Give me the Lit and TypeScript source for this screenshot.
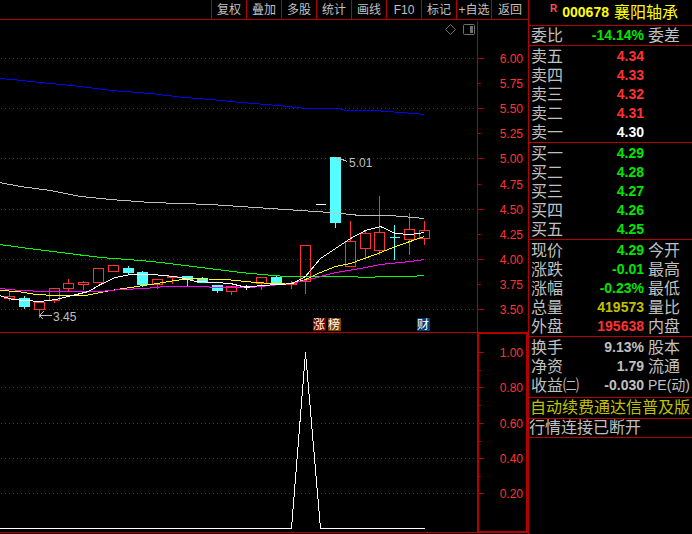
import { LitElement, html, svg, css } from "lit";
import { customElement } from "lit/decorators.js";

type Kind = "up" | "down" | "flat";
interface Candle {
  x: number;
  high: number;
  top: number;
  bottom: number;
  low: number;
  kind: Kind;
}

const c = (x: number, high: number, top: number, bottom: number, low: number, kind: Kind): Candle =>
  ({ x, high, top, bottom, low, kind });

const CANDLES: Candle[] = [
  c(9, 290, 296, 298, 299, "up"),
  c(24, 295, 298, 306, 307, "down"),
  c(39, 300, 302, 309, 316, "up"),
  c(54, 288, 288, 300, 301, "up"),
  c(68, 278, 283, 288, 289, "up"),
  c(83, 280, 282, 284, 288, "up"),
  c(98, 268, 268, 282, 282, "up"),
  c(113, 264, 265, 271, 271, "up"),
  c(128, 265, 268, 272, 273, "down"),
  c(142, 270, 272, 284, 285, "down"),
  c(157, 279, 279, 284, 287, "up"),
  c(172, 276, 276, 277, 282, "up"),
  c(187, 276, 276, 279, 285, "down"),
  c(202, 276, 279, 282, 282, "down"),
  c(217, 284, 285, 290, 291, "down"),
  c(231, 286, 286, 291, 293, "up"),
  c(246, 284, 286, 286, 288, "flat"),
  c(261, 277, 277, 283, 288, "up"),
  c(276, 274, 277, 282, 282, "down"),
  c(291, 280, 283, 284, 287, "up"),
  c(305, 245, 245, 281, 292, "up"),
  c(320, 204, 204, 204, 204, "flat"),
  c(335, 157, 157, 222, 226, "down"),
  c(350, 220, 241, 266, 266, "up"),
  c(365, 230, 233, 248, 256, "up"),
  c(379, 195, 232, 250, 253, "up"),
  c(394, 224, 237, 237, 258, "down"),
  c(409, 212, 229, 239, 253, "up"),
  c(424, 220, 230, 238, 243, "up"),
];

const AVERAGES: [string, string][] = [
  ["#0000ff", "-1,78 12,79 30,81 51,83 80,86 111,90 150,93 184,97 210,99 240,102 278,105 305,108 338,108 345,110 374,110 400,112 424,114"],
  ["#c0c0c0", "-1,182 20,186 50,190 80,196 110,199 150,202 180,203 210,204 240,206 270,208 300,210 330,212 360,215 390,215 424,218"],
  ["#00ff00", "-1,244 36,249 60,252 100,257 140,260 160,262 200,267 240,272 262,274 285,276 350,276 365,277 385,276 410,276 424,275"],
  ["#ffff00", "-1,290 18,291 35,294 55,295 85,295 110,290 130,287 150,284 175,280 190,278 225,279 255,282 272,283 290,283 305,279 320,272 335,266 350,263 375,254 395,246 424,236"],
  ["#ff00ff", "-1,288 20,290 45,291 100,291 120,289 145,288 165,286 205,286 212,287 250,287 270,285 290,283 305,280 320,276 335,272 360,268 380,264 410,261 424,259"],
  ["#ffffff", "-1,295 12,299 25,300 40,301 55,299 72,295 88,291 100,284 115,277 130,274 150,274 165,275 180,277 195,281 215,282 230,283 246,287 260,285 280,284 292,283 305,276 320,258 335,248 350,238 365,230 380,226 395,233 410,234 424,232"],
];

// [y, label, has grid line]
const PRICE_AXIS: [number, string, boolean][] = [
  [58, "6.00", true], [83, "5.75", false], [108, "5.50", true], [133, "5.25", false],
  [158, "5.00", true], [184, "4.75", false], [209, "4.50", true], [234, "4.25", false],
  [259, "4.00", true], [284, "3.75", false], [309, "3.50", true],
];
const SIGNAL_AXIS: [number, string, boolean][] = [
  [352, "1.00", false], [387, "0.80", true], [423, "0.60", true], [458, "0.40", true], [493, "0.20", true],
];

const BADGES: [number, string, string][] = [
  [313, "涨", "#800000"], [328, "榜", "#804000"], [417, "财", "#003c78"],
];

@customElement("stock-charts")
class StockCharts extends LitElement {
  static styles = css`
    :host { display: block; position: relative; }
    svg { display: block; width: 100%; height: auto; }
    .axis { stroke: #b40000; fill: none; }
    .grid { stroke: #c80000; stroke-dasharray: 1 3; fill: none; }
    .frame { stroke: #b40000; stroke-width: 2; fill: none; }
    .line { fill: none; stroke-width: 1; }
    .up { stroke: #ff3232; fill: none; }
    .down { stroke: #54ffff; fill: #54ffff; }
    .flat { stroke: #ffffff; fill: none; }
    .mark { stroke: #c0c0c0; fill: none; }
    text { font: 12px "Liberation Sans", "Noto Sans CJK SC", sans-serif; }
    .scale { fill: #ff3232; text-anchor: end; }
    .note { fill: #c0c0c0; }
    .badge { fill: #ffffff; text-anchor: middle; }
    .tools { position: absolute; top: 3px; right: 53px; display: flex; gap: 5px; }
    .tools button { width: 13px; height: 13px; padding: 0; border: 0; background: none; }
  `;

  private candle(k: Candle) {
    const l = k.x - 5;
    return svg`<g class=${k.kind}>
      ${k.low > k.bottom ? svg`<path d="M${k.x} ${k.bottom}V${k.low + 1}"/>` : null}
      ${k.top > k.high ? svg`<path d="M${k.x} ${k.high}V${k.top}"/>` : null}
      ${k.top === k.bottom
        ? svg`<path d="M${l} ${k.top}H${l + 10}"/>`
        : svg`<rect x=${l} y=${k.top} width="10" height=${k.bottom - k.top}/>`}
    </g>`;
  }

  render() {
    return html`
      <svg viewBox="0 20 528 312" role="img" aria-label="K线图">
        <g transform="translate(.5 .5)" shape-rendering="crispEdges">
          ${PRICE_AXIS.map(([y, , major]) => svg`
            ${major ? svg`<path class="grid" d="M.5 ${y}H476"/>` : null}
            <path class="axis" d="M477 ${y}H${major ? 483 : 480}"/>`)}
          <path class="axis" d="M477 20V332"/>
          ${CANDLES.map((k) => this.candle(k))}
          ${AVERAGES.map(([color, pts]) => svg`<polyline class="line" stroke=${color} points=${pts}/>`)}
          <path class="mark" d="M39 315H51M39 315L43 311M39 315L43 319M336 157L340 157M336 157L338 161M339 158L347 161"/>
        </g>
        ${PRICE_AXIS.map(([y, t]) => svg`<text class="scale" x="523" y=${y + 5}>${t}</text>`)}
        <text class="note" x="53" y="321">3.45</text>
        <text class="note" x="349" y="167">5.01</text>
        ${BADGES.map(([x, t, bg]) => svg`
          <rect x=${x} y="318" width="13" height="13" rx="1" fill=${bg}/>
          <text class="badge" x=${x + 6} y="329">${t}</text>`)}
      </svg>
      <svg viewBox="0 332 528 202" role="img" aria-label="指标图">
        <g transform="translate(.5 .5)" shape-rendering="crispEdges">
          ${SIGNAL_AXIS.map(([y, , grid]) => svg`
            ${grid ? svg`<path class="grid" d="M.5 ${y}H476"/>` : null}
            <path class="axis" d="M477 ${y}H483"/>`)}
          ${[370, 405, 441, 476].map((y) => svg`<path class="axis" d="M477 ${y}H480"/>`)}
          <path class="axis" d="M-1 332H477M-1 532H477"/>
          <polyline class="flat" points="-1,528 291,528 305,352 320,528 424,528"/>
        </g>
        <rect class="frame" x="478" y="333" width="49" height="199" shape-rendering="crispEdges"/>
        ${SIGNAL_AXIS.map(([y, t]) => svg`<text class="scale" x="523" y=${y + 5}>${t}</text>`)}
      </svg>
      <div class="tools">
        <button aria-label="标记">
          <svg viewBox="0 0 13 13"><path d="M6.500 1.500L11.500 6.500L6.500 11.500L1.500 6.500Z" fill="none" stroke="#707070"/></svg>
        </button>
        <button aria-label="侧栏">
          <svg viewBox="0 0 13 13"><rect x="1.500" y="1.500" width="11" height="10" rx="1" fill="none" stroke="#707070"/><rect x="8" y="3" width="3" height="7" fill="#707070"/></svg>
        </button>
      </div>`;
  }
}

type Row = [string, string, string, string];

const QUOTES: { spacing: string; rows: Row[] }[] = [
  { spacing: "tight", rows: [["委比", "-14.14%", "green", "委差"]] },
  {
    spacing: "padded",
    rows: [
      ["卖五", "4.34", "red", ""], ["卖四", "4.33", "red", ""], ["卖三", "4.32", "red", ""],
      ["卖二", "4.31", "red", ""], ["卖一", "4.30", "white", ""],
    ],
  },
  {
    spacing: "padded",
    rows: [
      ["买一", "4.29", "green", ""], ["买二", "4.28", "green", ""], ["买三", "4.27", "green", ""],
      ["买四", "4.26", "green", ""], ["买五", "4.25", "green", ""],
    ],
  },
  {
    spacing: "padded",
    rows: [
      ["现价", "4.29", "green", "今开"], ["涨跌", "-0.01", "green", "最高"], ["涨幅", "-0.23%", "green", "最低"],
      ["总量", "419573", "gold", "量比"], ["外盘", "195638", "red", "内盘"],
    ],
  },
  {
    spacing: "padded loose",
    rows: [["换手", "9.13%", "grey", "股本"], ["净资", "1.79", "grey", "流通"], ["收益㈡", "-0.030", "grey", "PE(动)"]],
  },
];

@customElement("quote-panel")
class QuotePanel extends LitElement {
  static styles = css`
    :host {
      display: block;
      border-left: 1px solid #b40000;
      color: #c0c0c0;
      font: 16px/19px "Liberation Sans", "Noto Sans CJK SC", sans-serif;
    }
    h1, section, p { margin: 0; border-bottom: 1px solid #b40000; white-space: nowrap; }
    h1 {
      display: flex;
      align-items: center;
      justify-content: flex-end;
      gap: 5px;
      height: 25px;
      padding-right: 14px;
      color: #ffff00;
      font-size: 16px;
      font-weight: 400;
    }
    h1 sup { align-self: flex-start; color: #ff5050; font: bold 10px/17px "Liberation Sans", sans-serif; }
    h1 b { font-size: 14px; font-weight: 700; }
    .padded { padding-top: 1px; }
    .loose { padding-bottom: 2px; }
    table { width: 100%; border-collapse: collapse; table-layout: fixed; }
    .name { width: 48px; }
    .num { width: 67px; }
    th, td { height: 19px; padding: 0; font-weight: 400; text-align: left; line-height: 19px; }
    th { padding-left: 2px; }
    .value { font-size: 14px; font-weight: 700; text-align: right; }
    .next { padding-left: 4px; }
    .small { font-size: 14px; }
    .red { color: #ff3232; }
    .green { color: #00e600; }
    .white { color: #ffffff; }
    .gold { color: #c0c000; }
    .grey { color: #c0c0c0; }
    .promo { height: 20px; line-height: 20px; }
    .promo a { padding-left: 1px; color: #c0c000; text-decoration: none; }
    .status { height: 18px; line-height: 18px; }
  `;

  render() {
    return html`
      <h1><sup>R</sup><b>000678</b><span>襄阳轴承</span></h1>
      ${QUOTES.map(({ spacing, rows }) => html`
        <section class=${spacing}>
          <table>
            <colgroup><col class="name" /><col class="num" /><col /></colgroup>
            <tbody>
              ${rows.map(([name, value, tone, next]) => html`
                <tr>
                  <th scope="row">${name}</th>
                  <td class="value ${tone}">${value}</td>
                  <td class="next ${next.length > 2 ? "small" : ""}">${next}</td>
                </tr>`)}
            </tbody>
          </table>
        </section>`)}
      <p class="promo"><a href="#renew">自动续费通达信普及版</a></p>
      <p class="status">行情连接已断开</p>`;
  }
}

@customElement("app-root")
class AppRoot extends LitElement {
  static styles = css`
    :host {
      display: grid;
      grid-template-columns: minmax(0, 1fr) 164px;
      min-height: 100vh;
      background: #000000;
    }
    nav { display: flex; justify-content: flex-end; border-bottom: 1px solid #b40000; }
    nav button {
      flex: 0 0 35px;
      height: 19px;
      padding: 1px 0 0;
      border: 0;
      border-left: 1px solid #b40000;
      background: none;
      color: #c0c0c0;
      font: 12px/18px "Liberation Sans", "Noto Sans CJK SC", sans-serif;
      white-space: nowrap;
    }
    nav button:last-child { flex-basis: 37px; }
  `;

  render() {
    const items = ["复权", "叠加", "多股", "统计", "画线", "F10", "标记", "+自选", "返回"];
    return html`
      <main>
        <nav>${items.map((t) => html`<button>${t}</button>`)}</nav>
        <stock-charts></stock-charts>
      </main>
      <quote-panel></quote-panel>`;
  }
}
